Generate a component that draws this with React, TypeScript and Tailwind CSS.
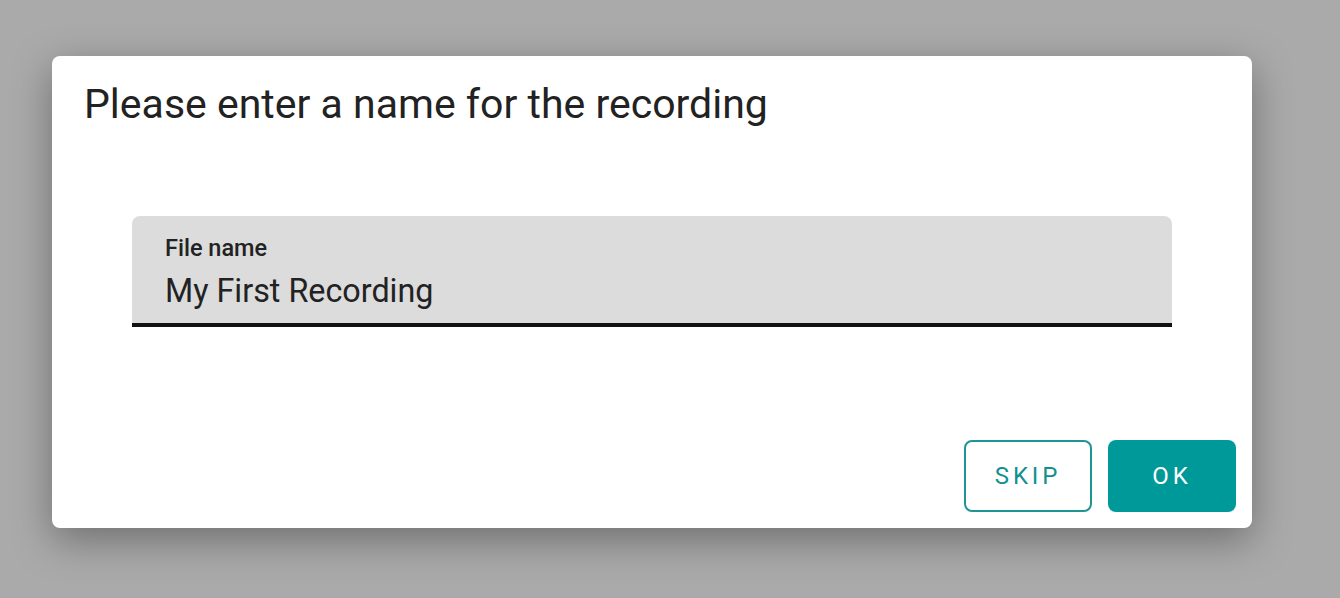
export default function App() {
  return (
    <div className="h-[598px] w-[1340px] bg-[#aaaaaa] pt-[56px] pl-[52px] font-['Roboto',sans-serif]">
      <div className="flex h-[472px] w-[1200px] flex-col rounded-[8px] bg-white shadow-[0_12px_40px_rgba(0,0,0,0.35)]">
        <h2 className="px-[32px] pt-[24px] text-[41px] leading-[48px] font-normal text-[#222222]">
          Please enter a name for the recording
        </h2>

        <div className="mx-[80px] mt-[88px] rounded-t-[8px] border-b-4 border-[#111111] bg-[#dcdcdc] px-[33px] pt-[19px] pb-[12px]">
          <label className="block text-[23.5px] leading-[26px] font-medium text-[#222222]">
            File name
          </label>
          <input
            className="mt-[10px] block w-full bg-transparent text-[32.3px] leading-[40px] text-[#222222] outline-none"
            defaultValue="My First Recording"
          />
        </div>

        <div className="mt-auto flex justify-end gap-[16px] p-[16px]">
          <button className="h-[72px] w-[128px] rounded-[8px] border-2 border-[#1f9494] text-[24px] tracking-[0.16em] text-[#138f8f]">
            SKIP
          </button>
          <button className="h-[72px] w-[128px] rounded-[8px] bg-[#009999] text-[24px] tracking-[0.16em] text-white">
            OK
          </button>
        </div>
      </div>
    </div>
  );
}
